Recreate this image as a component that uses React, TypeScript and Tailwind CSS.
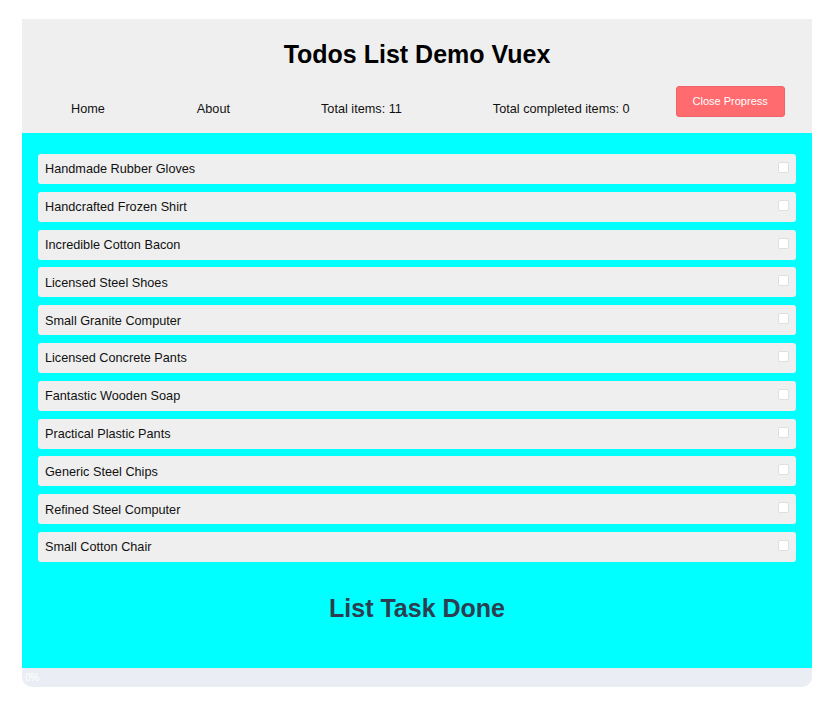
import React from 'react';

const todos = [
  'Handmade Rubber Gloves',
  'Handcrafted Frozen Shirt',
  'Incredible Cotton Bacon',
  'Licensed Steel Shoes',
  'Small Granite Computer',
  'Licensed Concrete Pants',
  'Fantastic Wooden Soap',
  'Practical Plastic Pants',
  'Generic Steel Chips',
  'Refined Steel Computer',
  'Small Cotton Chair',
];

export default function App() {
  return (
    <div className="min-h-[704px] bg-white pt-[19px] pl-[22px] font-['Liberation_Sans',Arial,sans-serif]">
      <div className="w-[790px]">
        <div className="bg-[#efefef] h-[114px] flex flex-col">
          <h1 className="text-[25px] font-bold text-black text-center mt-[20px] leading-[30px]">
            Todos List Demo Vuex
          </h1>
          <div className="flex items-start mt-[17px] pl-[49px] text-[12.7px] text-[#111]">
            <span className="mt-[14px]">Home</span>
            <span className="mt-[14px] ml-[92px]">About</span>
            <span className="mt-[14px] ml-[91px]">Total items: 11</span>
            <span className="mt-[14px] ml-[91px]">Total completed items: 0</span>
            <button className="ml-[46px] w-[109px] h-[31px] bg-[#ff6b6f] text-white text-[11px] rounded-[3px] border border-[#f06368]">
              Close Propress
            </button>
          </div>
        </div>
        <div className="bg-[#00ffff] h-[535px] px-[16px] pt-[21px] flex flex-col">
          <ul className="flex flex-col gap-[7.8px]">
            {todos.map((t) => (
              <li
                key={t}
                className="h-[30px] bg-[#efefef] rounded-[3px] flex items-center justify-between pl-[7px] pr-[7px] text-[12.7px] text-[#111]"
              >
                <span className="mt-[2px]">{t}</span>
                <span className="w-[11px] h-[11px] bg-white border border-[#dcdfe4] rounded-[2px] -mt-[3px]" />
              </li>
            ))}
          </ul>
          <h2 className="text-[25px] font-bold text-[#2c3e50] text-center mt-[28px]">List Task Done</h2>
        </div>
        <div className="h-[19px] bg-[#eaedf4] rounded-b-[10px] rounded-tl-[2px] flex items-center pl-[3px]">
          <span className="text-[10px] text-white">0%</span>
        </div>
      </div>
    </div>
  );
}
